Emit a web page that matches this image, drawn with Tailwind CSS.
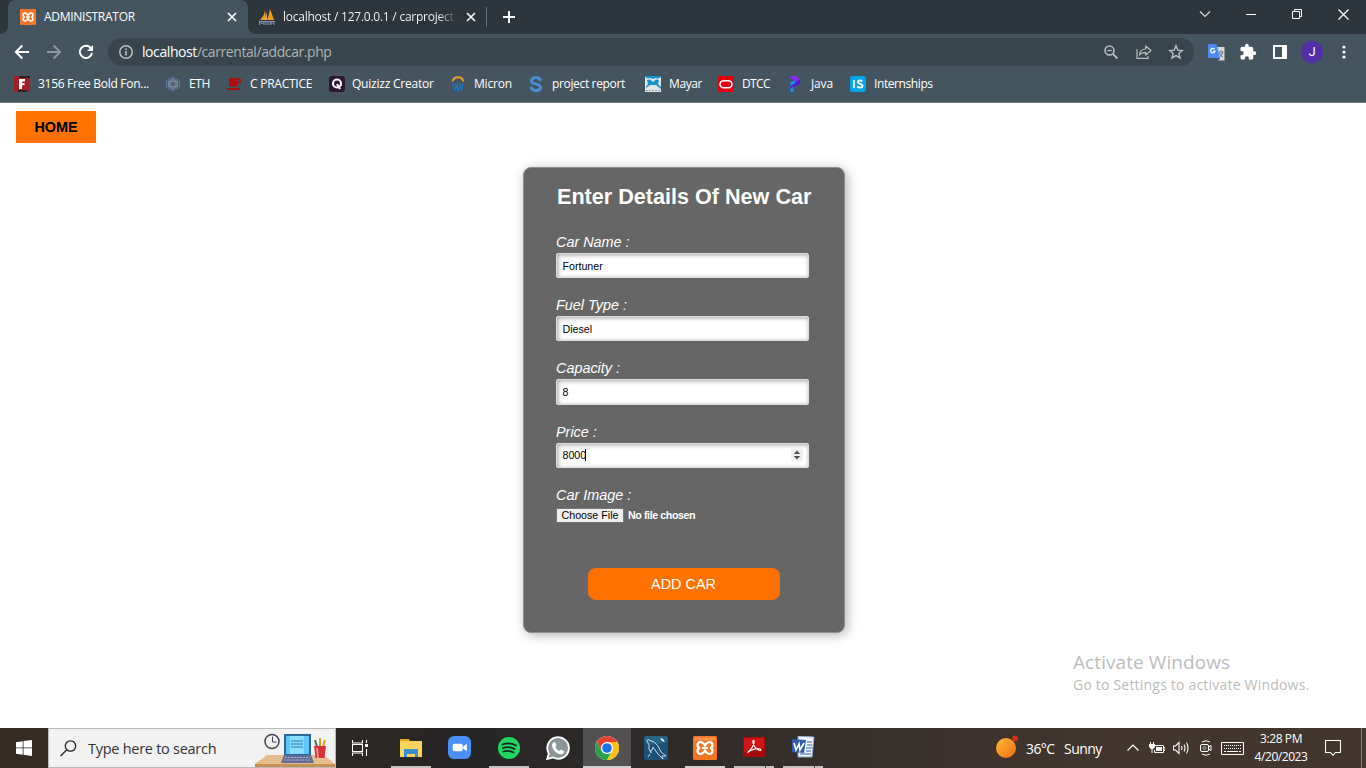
<!DOCTYPE html>
<html lang="en">
<head>
<meta charset="utf-8">
<title>ADMINISTRATOR</title>
<script src="https://cdn.jsdelivr.net/npm/@tailwindcss/browser@4"></script>
</head>
<body class="w-[1366px] h-[768px] overflow-hidden bg-white font-['Open_Sans',sans-serif] flex flex-col">

<!-- Tab strip -->
<header class="h-[34px] shrink-0 bg-[#2c363c] flex items-end text-white text-[12px]">
  <div class="w-2 h-[34px] bg-[#44555f] shrink-0"><div class="w-2 h-[34px] bg-[#2c363c] rounded-br-lg"></div></div>
  <div class="w-[240px] h-[34px] rounded-t-lg bg-[#44555f] flex items-center pl-3 shrink-0">
    <svg class="size-4 shrink-0" viewBox="0 0 24 24"><rect width="24" height="24" rx="1.500" fill="#f37623"/><path d="M12 9.500L10.500 7.500Q9 6 7 6.200 4.500 6.500 4.500 9T7 12q-2.500.5-2.500 3T7 17.800q2 .2 3.500-1.300L12 14.500l1.500 2q1.500 1.500 3.500 1.300 2.500-.3 2.500-2.800T17 12q2.500-.5 2.500-3T17 6.200q-2-.2-3.500 1.300zM9 12h6" fill="none" stroke="#fff" stroke-width="2.400"/></svg>
    <span class="ml-2 w-[182px] tracking-[-0.270px] whitespace-nowrap">ADMINISTRATOR</span>
    <svg class="size-3" viewBox="0 0 12 12"><path d="M2 2l8 8M10 2l-8 8" stroke="#fff" stroke-width="1.700"/></svg>
  </div>
  <div class="w-2 h-[34px] bg-[#44555f] shrink-0"><div class="w-2 h-[34px] bg-[#2c363c] rounded-bl-lg"></div></div>
  <div class="h-[34px] flex items-center pl-[2px]">
    <svg class="w-[18px] h-[17px] shrink-0" viewBox="0 0 18 17"><path d="M7 0Q7 6 2 11h6zM12 0q-1 6-3 11h7Q14 5 12 0z" fill="#f89c0e"/><path d="M9 3L6.500 11H9z" fill="#c6b48f"/><path d="M1 12.500h16M1.500 16v-3.500L4 15l2-2.500V16M8 13v3M10 13v3M12 16v-3h2v2h-2M16 13v3" fill="none" stroke="#8790b8"/></svg>
    <span class="ml-[7px] w-[176px] whitespace-nowrap tracking-[-0.240px] bg-linear-to-r from-white from-88% to-[#2c363c] bg-clip-text text-transparent">localhost / 127.0.0.1 / carproject /</span>
    <svg class="ml-[6px] size-3 shrink-0" viewBox="0 0 12 12"><path d="M2 2l8 8M10 2l-8 8" stroke="#fff" stroke-width="1.600"/></svg>
    <div class="ml-[9px] w-px h-5 bg-[#66727a]"></div>
    <svg class="ml-[16px] size-3" viewBox="0 0 12 12"><path d="M6 0v12M0 6h12" stroke="#fff" stroke-width="2"/></svg>
  </div>
  <div class="ml-auto self-start h-[28px] flex items-center pr-[17px]">
    <svg class="w-3 h-3 mr-[35px]" viewBox="0 0 12 12"><path d="M1 3.500l5 5 5-5" fill="none" stroke="#d8dcdf" stroke-width="1.200"/></svg>
    <svg class="w-[10px] h-3 mr-[36px]" viewBox="0 0 10 12"><path d="M0 6.500h10" stroke="#fff"/></svg>
    <svg class="size-[10px] mr-[36px]" viewBox="0 0 10 10"><path d="M.5 2.500h7v7h-7zM2.500 2.500v-2h7v7h-2" fill="none" stroke="#fff"/></svg>
    <svg class="size-[11px]" viewBox="0 0 11 11"><path d="M.5.5l10 10M10.500.5l-10 10" stroke="#fff" stroke-width="1.200"/></svg>
  </div>
</header>

<!-- Navigation bar -->
<div class="h-[36px] shrink-0 bg-[#44555f] flex items-center">
  <svg class="ml-[14px] w-4 h-4 mr-4" viewBox="0 0 16 16"><path d="M15 8H2M8.300 1.500L1.800 8l6.500 6.500" fill="none" stroke="#fff" stroke-width="1.900"/></svg>
  <svg class="w-4 h-4 mr-4" viewBox="0 0 16 16"><path d="M1 8h13M7.700 1.500L14.200 8l-6.500 6.500" fill="none" stroke="#8c979e" stroke-width="1.900"/></svg>
  <svg class="w-4 h-4 mr-[14px]" viewBox="0 0 16 16"><path d="M13 4.300A6.100 6.100 0 1 0 14 9" fill="none" stroke="#fff" stroke-width="2"/><path d="M15 1v6H9z" fill="#fff"/></svg>
  <div class="w-[1086px] h-7 rounded-full bg-[#38454c] flex items-center pl-[11px] shrink-0 text-[14px]">
    <svg class="size-[14px]" viewBox="0 0 14 14"><circle cx="7" cy="7" r="6.200" fill="none" stroke="#c1c7ca" stroke-width="1.400"/><path d="M7 6v4.500M7 3.400v1.500" stroke="#c1c7ca" stroke-width="1.500"/></svg>
    <span class="ml-[9px] pb-px tracking-[-0.420px] text-[#aeb5b9] whitespace-nowrap"><span class="text-white">localhost</span>/carrental/addcar.php</span>
    <div class="ml-auto flex items-center pr-[10px]">
      <svg class="size-[14px] mr-[18px]" viewBox="0 0 14 14"><circle cx="5.500" cy="5.500" r="4.500" fill="none" stroke="#b9c0c4" stroke-width="1.500"/><path d="M9 9l4.500 4.500" stroke="#b9c0c4" stroke-width="1.900"/><path d="M3.300 5.500h4.400" stroke="#b9c0c4" stroke-width="1.200"/></svg>
      <svg class="w-4 h-[14px] mr-4" viewBox="0 0 16 14"><path d="M1 4v9.300h11V11" fill="none" stroke="#b9c0c4" stroke-width="1.200"/><path d="M3.500 10c.3-4 2.500-6 6.200-6V1L15 5.500 9.700 10V7.300C7 7.300 5 8 3.500 10z" fill="none" stroke="#b9c0c4" stroke-width="1.200" stroke-linejoin="round"/></svg>
      <svg class="w-[16px] h-[16px]" viewBox="0 0 16 16"><path d="M8 1.800l1.800 4.300 4.600.4-3.500 3 1.100 4.500-4-2.400-4 2.400 1.100-4.500-3.500-3 4.600-.4z" fill="none" stroke="#b9c0c4" stroke-width="1.400"/></svg>
    </div>
  </div>
  <svg class="ml-[14px] size-[17px] shrink-0" viewBox="0 0 17 17"><path d="M8 3h8.500v13.500H10z" fill="#d5d7d8"/><path d="M10.500 8h5M13 6.500V8M11.500 13q3-2 3.200-5M11.500 9q1 3 3.500 4" fill="none" stroke="#5d757d"/><path d="M8 14l2.500 2.500L12 14z" fill="#2a56b8"/><path d="M1 0h7.500L12 14H1q-1 0-1-1V1q0-1 1-1z" fill="#4a8af4"/><path d="M6.500 5.200A2.200 2.200 0 1 0 7 7H5" fill="none" stroke="#fff" stroke-width="1.200"/></svg>
  <svg class="ml-[14px] size-[18px] shrink-0" viewBox="0 0 24 24"><path fill="#fff" d="M20.500 11H19V7a2 2 0 0 0-2-2h-4V3.500a2.500 2.500 0 0 0-5 0V5H4a2 2 0 0 0-2 2v3.800h1.500a2.700 2.700 0 0 1 0 5.400H2V20a2 2 0 0 0 2 2h3.800v-1.500a2.700 2.700 0 0 1 5.400 0V22H17a2 2 0 0 0 2-2v-4h1.500a2.500 2.500 0 0 0 0-5z"/></svg>
  <svg class="ml-[16px] size-[14px] shrink-0" viewBox="0 0 14 14"><path fill="#fff" fill-rule="evenodd" d="M0 0h14v14H0zM2 2v10h7V2z"/></svg>
  <div class="ml-[14px] size-[22px] rounded-full bg-[#512da8] text-white text-[13px] font-['Roboto',sans-serif] flex items-center justify-center shrink-0">J</div>
  <svg class="ml-[19px] w-1 h-[14px]" viewBox="0 0 4 14"><g fill="#fff"><circle cx="2" cy="2" r="1.600"/><circle cx="2" cy="7" r="1.600"/><circle cx="2" cy="12" r="1.600"/></g></svg>
</div>

<!-- Bookmarks bar -->
<nav class="h-[33px] shrink-0 bg-[#44555f] border-b border-[#6b7a83] flex items-center pl-[14px] pb-[5px] text-white text-[12px] whitespace-nowrap">
  <div class="w-[151px] flex items-center gap-2 tracking-[-0.290px]">
    <svg class="size-4 shrink-0" viewBox="0 0 16 16"><path fill="#a61c22" d="M0 0h16v16H0z"/><path fill="#222" d="M5 0h11v2H5zM4 14h9v2H4z"/><path fill="#fff" d="M5 3h6v2.500H8V7h2.500v2.300H8V13H5z"/></svg>3156 Free Bold Fon...</div>
  <div class="w-[61px] flex items-center gap-2 tracking-[-0.450px]">
    <svg class="size-4 shrink-0" viewBox="0 0 16 16"><path d="M8 .8l6.500 3.600v7.200L8 15.200l-6.500-3.600V4.400z" fill="#4c6172" stroke="#5473a6"/><path d="M8 3l4.500 7.500h-9zM8 13L3.500 5.500h9zM8 3L3.500 5.500v5L8 13l4.500-2.500v-5z" fill="none" stroke="#81909a" stroke-width=".8"/></svg>ETH</div>
  <div class="w-[103px] flex items-center gap-2 tracking-[-0.250px]">
    <svg class="size-4 shrink-0" viewBox="0 0 16 16"><path fill="#b00b0b" d="M3 2h8.500v7q0 1.500-1.500 1.500H4.500Q3 10.500 3 9zM1 12h13v2H1z"/><path d="M11.500 3h2.500v3.500h-2.500" fill="none" stroke="#b00b0b" stroke-width="1.500"/></svg>C PRACTICE</div>
  <div class="w-[121px] flex items-center gap-[7px] tracking-[-0.220px]">
    <svg class="size-4 shrink-0" viewBox="0 0 16 16"><rect width="16" height="16" rx="3" fill="#2e1533"/><circle cx="8" cy="7.500" r="4" fill="none" stroke="#fff" stroke-width="2.200"/><path d="M8 8l3 5" stroke="#fff" stroke-width="2"/></svg>Quizizz Creator</div>
  <div class="w-[78px] flex items-center gap-2 tracking-[-0.200px]">
    <svg class="size-4 shrink-0" viewBox="0 0 16 16"><path d="M2.500 5.500Q3.500 1.300 8 1.200q4.500.1 5.500 4.300" fill="none" stroke="#e59e29" stroke-width="2"/><path d="M2.500 7l2 7.500L7 8l1.500 6.500L11 8M5 7.500l2.500 7M9.500 7.500l2 7L13.500 7" fill="none" stroke="#1977c2" stroke-width="1.100"/></svg>Micron</div>
  <div class="w-[117px] flex items-center gap-2 tracking-[-0.350px]">
    <svg class="size-4 shrink-0" viewBox="0 0 16 16"><path d="M12.500 4.800Q12 1.600 8 1.600T3.500 4.700Q3.500 7 8 8t4.700 3.500q-.4 3-4.700 3t-5-3.500" fill="none" stroke="#4a90d9" stroke-width="2.800"/></svg>project report</div>
  <div class="w-[73px] flex items-center gap-2 tracking-[-0.400px]">
    <svg class="size-4 shrink-0" viewBox="0 0 16 16"><path fill="#dfe6ea" d="M0 0h16v16H0z"/><path d="M0 0h16v1l-3 1.500L10.500 2 8 3 5.500 2 3 2.500 0 1zM2 4l3-.5L8 6l3-2.500 3 .5-1 4 3 3v2l-5-4H5l-4 3v-1l2-3z" fill="#1593cf"/><path d="M1 14.500h14" stroke="#999" stroke-dasharray="2 1"/></svg>Mayar</div>
  <div class="w-[69px] flex items-center gap-2 tracking-[-0.650px]">
    <svg class="size-4 shrink-0" viewBox="0 0 16 16"><path fill="#e2000b" d="M0 0h16v16H0z"/><rect x="2" y="4.700" width="12" height="7" rx="3.500" fill="none" stroke="#fff" stroke-width="1.600"/></svg>DTCC</div>
  <div class="w-[63px] flex items-center gap-2 tracking-[-0.150px]">
    <svg class="size-4 shrink-0" viewBox="0 0 16 16"><path fill="#1898f5" d="M3.500 6L8 4.500v5L6.500 11v5h-3z"/><path fill="#8a2cf5" d="M3.500 0H9l4 3v4L3.500 2.500z"/><path fill="#5a14e0" d="M13 3v4.500l-9.500 5V10L9 6.500z"/></svg>Java</div>
  <div class="flex items-center gap-2 tracking-[-0.410px]">
    <svg class="size-4 shrink-0" viewBox="0 0 16 16"><rect width="16" height="16" rx="2.500" fill="#00a5ec"/><path d="M4 4v8M12.300 5.500Q11.500 4.500 9.800 4.500 8 4.500 8 6t2.200 2q2.300.5 2.300 2t-2.500 1.600q-1.700 0-2.700-1.200" fill="none" stroke="#fff" stroke-width="1.800"/></svg>Internships</div>
</nav>

<!-- Page -->
<main class="h-[625px] shrink-0 relative flex flex-col items-center pt-[8px] font-['Liberation_Sans',sans-serif]">
  <a class="self-start ml-4 w-[80px] h-8 pt-px bg-[#ff7200] flex items-center justify-center text-black font-bold text-[14.400px]">HOME</a>
  <form class="mt-6 ml-[2px] w-[322px] h-[466px] rounded-[8px] bg-[#666] border border-[#8f8f8f] shadow-[2px_2px_12px_rgba(0,0,0,0.3)] px-8 pt-[15px] flex flex-col text-white text-[14.400px] italic">
    <h1 class="not-italic font-bold text-[21.600px] leading-[28px] whitespace-nowrap pl-px">Enter Details Of New Car</h1>
    <label class="mt-[21px] h-[21px] leading-[20px]">Car Name :</label>
    <div class="w-[253px] h-[25px] bg-white border border-[#ddd] rounded-[2px] shadow-[inset_1px_1px_4px_rgba(0,0,0,0.38)] text-black not-italic text-[10.670px] flex items-center pl-[5.500px]">Fortuner</div>
    <label class="mt-[17px] h-[21px] leading-[20px]">Fuel Type :</label>
    <div class="w-[253px] h-[25px] bg-white border border-[#ddd] rounded-[2px] shadow-[inset_1px_1px_4px_rgba(0,0,0,0.38)] text-black not-italic text-[10.670px] flex items-center pl-[5.500px]">Diesel</div>
    <label class="mt-[17px] h-[21px] leading-[20px]">Capacity :</label>
    <div class="w-[253px] h-[26px] bg-white border border-[#ddd] rounded-[2px] shadow-[inset_1px_1px_4px_rgba(0,0,0,0.38)] text-black not-italic text-[10.670px] flex items-center pl-[5.500px]">8</div>
    <label class="mt-[17px] h-[21px] leading-[20px]">Price :</label>
    <div class="w-[253px] h-[25px] bg-white border border-[#ddd] rounded-[2px] shadow-[inset_1px_1px_4px_rgba(0,0,0,0.38)] text-black not-italic text-[10.670px] flex items-center pl-[5.500px] pb-[2px]">8000<span class="-ml-px w-px h-3 bg-black"></span>
      <svg class="ml-auto mr-[5px] size-3" viewBox="0 0 12 12"><path fill="#efefef" d="M0 0h12v12H0z"/><path fill="#505050" d="M6 1.500l3.200 3.500H2.800zM6 10.500L2.800 7h6.400z"/></svg></div>
    <label class="mt-[17px] h-[21px] leading-[20px]">Car Image :</label>
    <div class="mt-[2px] h-[15px] flex items-center not-italic text-[10.670px] whitespace-nowrap">
      <span class="w-[68px] h-[15px] leading-[13px] bg-[#efefef] border border-[#767676] text-black text-center">Choose File</span>
      <span class="ml-1 mt-[-2px] font-bold tracking-[-0.400px]">No file chosen</span>
    </div>
    <button type="button" class="mt-[45px] self-center w-[192px] h-8 pt-px pr-px rounded-[8px] bg-[#ff7200] not-italic text-[14.400px] text-white">ADD CAR</button>
  </form>
  <div class="absolute left-[1073px] top-[547px] text-[#bcbcbc] font-['Open_Sans',sans-serif] whitespace-nowrap">
    <div class="text-[19px] leading-[24px] tracking-[0.080px]">Activate Windows</div>
    <div class="text-[14px] leading-[22px] tracking-[0.200px]">Go to Settings to activate Windows.</div>
  </div>
</main>

<!-- Taskbar -->
<footer class="h-10 shrink-0 flex items-stretch bg-linear-to-r from-[#352b22] from-5% via-[#272626] via-35% to-[#42362f] to-80% text-white whitespace-nowrap">
  <div class="w-12 flex items-center justify-center"><svg class="size-4" viewBox="0 0 16 16"><path fill="#fff" d="M0 2.200L6.700 1.200v6.300H0zM7.500 1.100L16 0v7.500H7.500zM0 8.300h6.700v6.400L0 13.800zM7.500 8.300H16V16l-8.500-1.200z"/></svg></div>
  <div class="w-[288px] bg-[#f2f2f2] border border-[#b9b9b9] flex items-center text-[#333] text-[14.500px]">
    <svg class="ml-[11px] size-[17px] shrink-0" viewBox="0 0 17 17"><circle cx="10.500" cy="6" r="5.200" fill="none" stroke="#222" stroke-width="1.300"/><path d="M6.800 9.800L.6 16" stroke="#222" stroke-width="1.300"/></svg>
    <span class="ml-[11px] pt-px tracking-[-0.270px]">Type here to search</span>
    <svg class="ml-auto w-[80px] h-[38px] shrink-0" viewBox="0 0 80 38">
      <path d="M12 26h57l11 9v3H0v-3z" fill="#e4bd8c"/><path d="M0 35h80v3H0z" fill="#c68f58"/>
      <circle cx="17" cy="12.500" r="7" fill="#eee" stroke="#454152" stroke-width="1.500"/><path d="M17.500 7.500V13h4" fill="none" stroke="#454152"/>
      <path d="M29 5h27v22H29z" fill="#27699b"/><path d="M31 7h23v18H31z" fill="#62c5fa"/><path d="M35 7h14v18H35z" fill="#8bdcff"/><path d="M36 12h12M36 15h12M36 18h12" stroke="#237cb4"/>
      <path d="M29 26h27l3 8H26z" fill="#626b94"/><path d="M30 28.500h25M29 31h27" stroke="#abb2d0" stroke-dasharray="2 1"/>
      <path d="M62 18l-2-7" stroke="#367b58" stroke-width="2"/><path d="M65 18V9M68 18l2-7" stroke="#d99a20" stroke-width="2"/><path d="M59 17h12l-1.500 12h-9z" fill="#d8323b"/><path d="M61 19h2l1 10h-2z" fill="#f58b87"/>
    </svg>
  </div>
  <div class="flex ml-[-1px]">
    <div class="w-[51px] flex items-center justify-center"><svg class="size-4 -ml-px" viewBox="0 0 16 16"><path d="M.5 0v3h10V0M.5 16v-3h10v3M.5 4.500h10v7H.5zM14.500 0v3M14.500 9v7" fill="none" stroke="#fff" stroke-width="1.100"/><path fill="#fff" d="M13 4h3v3h-3z"/></svg></div>
    <div class="w-[49px] flex flex-col items-center"><svg class="mt-[9px] w-[22px] h-[22px]" viewBox="0 0 22 22"><path fill="#e8a21c" d="M0 2h9l1 2H0z"/><path fill="#ffd45b" d="M0 4h22v16H0z"/><path fill="#3a8fd0" d="M4 12h14v8h-3v-3H7v3H4z"/></svg><div class="mt-auto w-10 h-[2px] bg-[#c4c0bd]"></div></div>
    <div class="w-[49px] flex justify-center"><svg class="mt-[8px] size-[23px]" viewBox="0 0 22 22"><rect width="22" height="22" rx="6" fill="#4a90fb"/><rect x="4.500" y="7.500" width="9.500" height="7" rx="1.500" fill="#fff"/><path fill="#fff" d="M14.500 10l3.500-2.500v7L14.500 12z"/></svg></div>
    <div class="w-[49px] flex flex-col items-center"><svg class="mt-[9px] size-[22px]" viewBox="0 0 22 22"><circle cx="11" cy="11" r="11" fill="#1ed760"/><path d="M4.500 7.500Q12 5 18 8.500M5 11q6.500-2 11.500 1M5.500 14.500q5.500-1.500 10 1" fill="none" stroke="#1c2620" stroke-width="1.800" stroke-linecap="round"/></svg><div class="mt-auto w-10 h-[2px] bg-[#c4c0bd]"></div></div>
    <div class="w-[50px] flex justify-center"><svg class="mt-[8px] size-6" viewBox="0 0 24 24"><path d="M1.200 23l1.600-5.500A10.800 10.800 0 1 1 7 21.500z" fill="#8c9698" stroke="#fff" stroke-width="1.800"/><path d="M7 6.500l2-.5 1.500 3.500L9.300 11q1.500 3 4 4l1.600-1.500 3.300 1.700q-.5 3-3.500 3-6-1-8.500-7.500Q5.700 8 7 6.500z" fill="#fff"/></svg></div>
    <div class="w-12 bg-[#515151] flex flex-col items-center"><svg class="mt-[8px] size-6" viewBox="0 0 24 24"><circle cx="12" cy="12" r="12" fill="#fff"/><path fill="#e34133" d="M1.600 6A12 12 0 0 1 22.400 6H12L6.800 15z"/><path fill="#2aa24c" d="M1.600 6L6.800 15 12 18l4-1-4 7A12 12 0 0 1 1.600 6z"/><path fill="#fbc116" d="M12 6h10.400A12 12 0 0 1 12 24l5.200-9z"/><circle cx="12" cy="12" r="6" fill="#fff"/><circle cx="12" cy="12" r="4.800" fill="#1a73e8"/></svg><div class="mt-auto w-12 h-[2px] bg-[#d1d1d1]"></div></div>
    <div class="w-[50px] flex justify-center"><svg class="mt-[8px] size-6" viewBox="0 0 24 24"><rect width="24" height="24" rx="2" fill="#1d5278"/><path d="M2 0h20l2 2v3Q12 11 0 7V2z" fill="#286388"/><path d="M6 18L4 21M7 17Q4 13 5 9L3 5q0-2 2-1 6 1 9 6l3 6 5 4-4 0 1 3-5-5-5-7q0 4-2 3z" fill="none" stroke="#c6d7e2" stroke-width="1"/><path d="M16 2l3 1 2 3-3-1z" fill="#fff"/></svg></div>
    <div class="w-[48px] flex flex-col items-center"><svg class="mt-[8px] size-6" viewBox="0 0 24 24"><rect width="24" height="24" rx="1.500" fill="#f37623"/><path d="M1.500 1.500h21v3h-21z" fill="#f89350"/><path d="M12 9.500L10.500 7.500Q9 6 7 6.200 4.500 6.500 4.500 9T7 12q-2.500.5-2.500 3T7 17.800q2 .2 3.500-1.300L12 14.500l1.500 2q1.500 1.500 3.500 1.300 2.500-.3 2.500-2.800T17 12q2.500-.5 2.500-3T17 6.200q-2-.2-3.500 1.300zM9 12h6" fill="none" stroke="#fff" stroke-width="2.200"/></svg><div class="mt-auto w-10 h-[2px] bg-[#d1d1d1]"></div></div>
    <div class="w-[50px] flex flex-col items-center"><svg class="mt-[9px] w-[22px] h-[20px]" viewBox="0 0 22 20"><path fill="#a50b0b" d="M0 0h22v20H0z"/><path fill="#d41414" d="M1 1h20v10q-10 0-20 4z"/><path d="M4.500 15.500Q9 12.500 11 6q.5-3-.7-2.500-1.300 1 .7 5 2.500 4.500 6.500 5 1.500-1-1-1.800-6-.5-12 3.800z" fill="none" stroke="#fff" stroke-width="1.100"/></svg><div class="mt-auto w-10 h-[2px] bg-[#c4c0bd] flex justify-end"><span class="mr-2 w-px bg-[#444]"></span></div></div>
    <div class="w-[48px] flex flex-col items-center"><svg class="mt-[8px] w-[24px] h-[22px]" viewBox="0 0 24 22"><path d="M7 0l16 1-2 20H7z" fill="#f2f5fb" stroke="#86a3d0"/><path d="M16 6h5M16 9h5M15 12h6M15 15h5M9 18h11" stroke="#315ca8"/><path d="M1 3l14 1-2 13-12-1z" fill="#315caa"/><path d="M3 7l2 7 3-6 1 6 4-7" fill="none" stroke="#fff" stroke-width="1.700"/></svg><div class="mt-auto w-10 h-[2px] bg-[#c4c0bd] flex justify-end"><span class="mr-2 w-px bg-[#444]"></span></div></div>
  </div>
  <div class="ml-auto flex items-center">
    <svg class="w-[23px] h-[23px] mt-[-3px]" viewBox="0 0 23 23"><defs><linearGradient id="sun" x1="0" y1="0" x2="1" y2="1"><stop stop-color="#f8bd35"/><stop offset="1" stop-color="#f36a12"/></linearGradient></defs><circle cx="10" cy="13" r="10" fill="url(#sun)"/><circle cx="19" cy="3.500" r="3" fill="#d0301e"/></svg>
    <span class="ml-[7px] w-[38px] text-[14px] tracking-[-0.600px]">36°C</span><span class="w-[63px] text-[14px] tracking-[-0.550px]">Sunny</span>
    <svg class="w-3 h-3" viewBox="0 0 12 12"><path d="M.5 8.500L6 3l5.500 5.500" fill="none" stroke="#fff" stroke-width="1.200"/></svg>
    <svg class="ml-[10px] w-4 h-3" viewBox="0 0 16 12"><path d="M6 3.500h8.500v7h-9V8M14.500 5.500H16v3h-1.500" fill="none" stroke="#fff"/><path fill="#fff" d="M7 5h6v4H7zM0 2h6v3L4 7H2L0 5zM1 0h1v2H1zM4 0h1v2H4zM2.500 7h1v4h-1z"/></svg>
    <svg class="ml-2 w-[17px] h-[14px]" viewBox="0 0 17 14"><path d="M.5 5v4h2L6 12.500v-11L2.500 5zM8.500 5q1 2 0 4M11 3.500q2 3.500 0 7M13.500 1.500q3 5.500 0 11" fill="none" stroke="#fff" stroke-width="1.100"/></svg>
    <svg class="ml-[10px] w-3 h-4" viewBox="0 0 12 16"><path d="M2 2q4-2.500 8 0M2 14q4 2.500 8 0" fill="none" stroke="#fff"/><rect x=".5" y="4.500" width="8" height="7" rx="1.500" fill="none" stroke="#fff"/><circle cx="4.500" cy="8" r="1.500" fill="none" stroke="#fff" stroke-width=".6"/><path d="M8.500 7l2.500-1.500v5L8.500 9" fill="none" stroke="#fff"/></svg>
    <svg class="ml-[9px] w-[23px] h-[13px]" viewBox="0 0 23 13"><path d="M.5.5h22v12H.5z" fill="none" stroke="#fff"/><path d="M3 3.500h17M3 6.500h17" stroke="#fff" stroke-dasharray="1 1"/><path d="M3 9.500h2M6 9.500h11M18 9.500h2" stroke="#fff"/></svg>
    <div class="ml-[9px] w-[56px] text-center text-[12px] leading-[18px] pb-px flex flex-col items-center"><span class="tracking-[-0.400px]">3:28 PM</span><span class="tracking-[-0.450px]">4/20/2023</span></div>
    <svg class="ml-[16px] w-4 h-4" viewBox="0 0 16 16"><path d="M.5.500h15v12h-5L8 15.300 5.500 12.500h-5z" fill="none" stroke="#fff" stroke-width="1.100"/></svg>
    <div class="ml-[20px] w-px h-10 bg-[#8b8581] mr-1"></div>
  </div>
</footer>
</body>
</html>
